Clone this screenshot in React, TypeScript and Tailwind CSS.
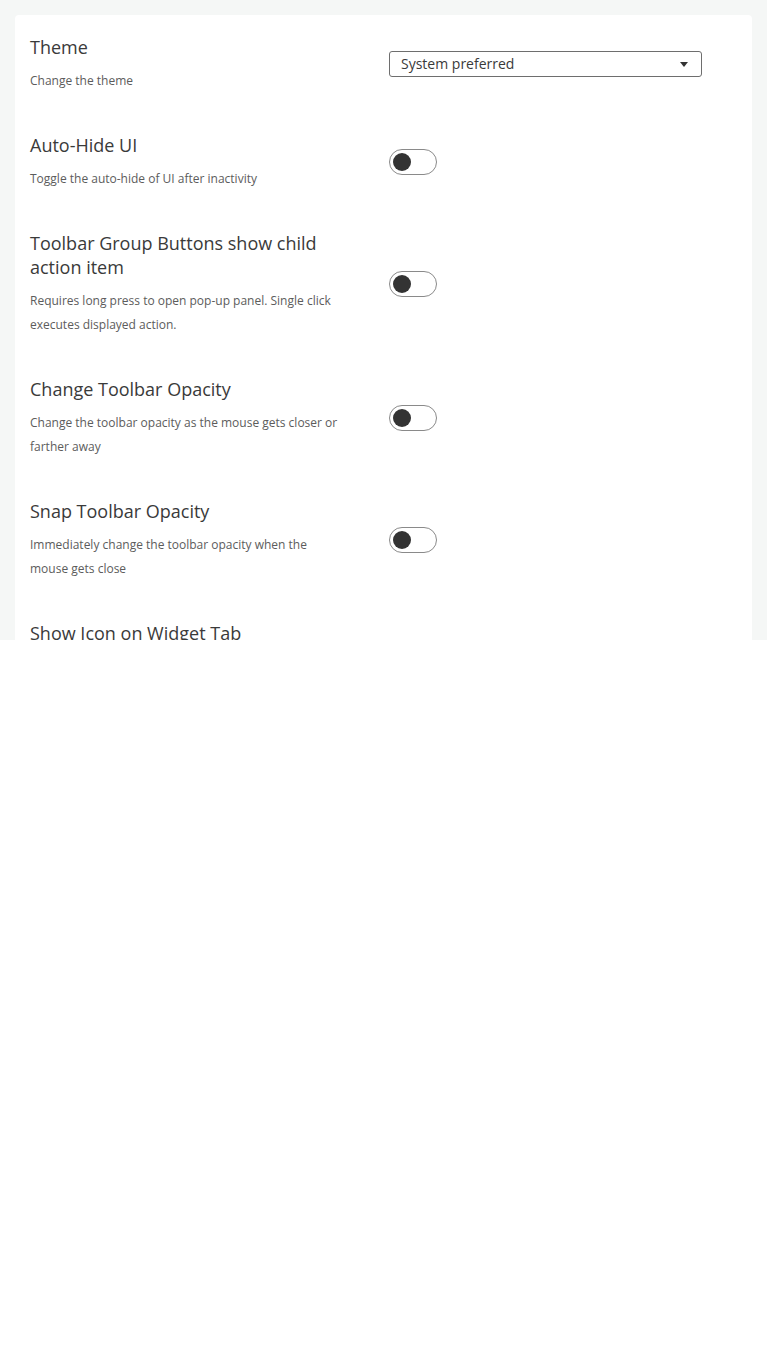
import React from "react";

const rows: { title: string; desc: string; kind: "select" | "toggle" }[] = [
  { title: "Theme", desc: "Change the theme", kind: "select" },
  { title: "Auto-Hide UI", desc: "Toggle the auto-hide of UI after inactivity", kind: "toggle" },
  {
    title: "Toolbar Group Buttons show child action item",
    desc: "Requires long press to open pop-up panel. Single click executes displayed action.",
    kind: "toggle",
  },
  {
    title: "Change Toolbar Opacity",
    desc: "Change the toolbar opacity as the mouse gets closer or farther away",
    kind: "toggle",
  },
  {
    title: "Snap Toolbar Opacity",
    desc: "Immediately change the toolbar opacity when the mouse gets close",
    kind: "toggle",
  },
  {
    title: "Show Icon on Widget Tab",
    desc: "Show the widget icon next to the title on the tab of each widget panel",
    kind: "toggle",
  },
];

function Toggle() {
  return (
    <div className="w-[48px] h-[26px] rounded-full border border-[#8a8a8a] bg-white flex items-center px-[3px]">
      <div className="w-[18px] h-[18px] rounded-full bg-[#333333]" />
    </div>
  );
}

function Select() {
  return (
    <div className="w-[313px] h-[26px] rounded-[3px] border border-[#6e6e6e] bg-white flex items-center justify-between pl-[11px] pr-[13px]">
      <span className="text-[14px] leading-[20px] font-normal text-[#3a3a3a]">System preferred</span>
      <svg width="8" height="5" viewBox="0 0 8 5">
        <path d="M0 0 L8 0 L4 5 Z" fill="#333333" />
      </svg>
    </div>
  );
}

export default function App() {
  return (
    <div style={{ fontFamily: '"Open Sans", "Noto Sans", sans-serif' }} className="bg-white">
      <div className="h-[640px] overflow-hidden bg-[#f5f7f6] px-[15px] pt-[15px]">
        <div className="bg-white rounded-[4px] px-[15px] min-h-[700px]">
          {rows.map((r) => (
            <div key={r.title} className="flex items-center pt-[20px] pb-[20px]">
              <div className="w-[359px] pr-[47px]">
                <div className="text-[18px] leading-[24px] font-normal text-[#3a3a3a]">{r.title}</div>
                <div className="mt-[10px] text-[12px] leading-[24px] font-normal text-[#5c5c5c]">{r.desc}</div>
              </div>
              <div>{r.kind === "select" ? <Select /> : <Toggle />}</div>
            </div>
          ))}
        </div>
      </div>
    </div>
  );
}
